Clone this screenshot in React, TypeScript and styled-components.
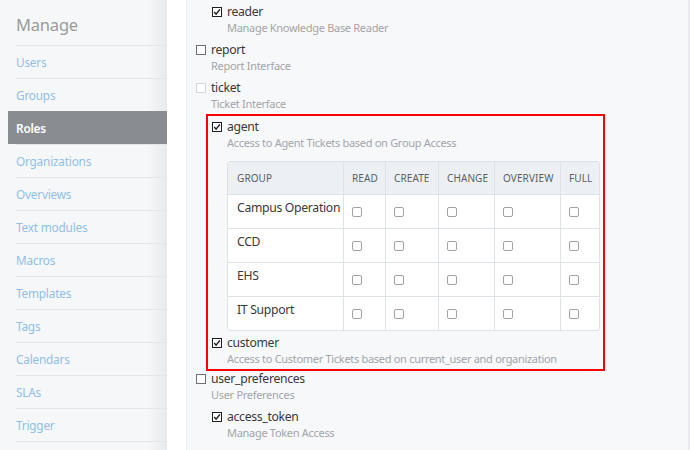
import React from "react";
import styled, { createGlobalStyle } from "styled-components";

const GlobalStyle = createGlobalStyle`
  html, body {
    margin: 0;
    padding: 0;
    background: #fff;
    font-family: "Noto Sans", "Open Sans", sans-serif;
  }
  * {
    box-sizing: border-box;
  }
`;

const Page = styled.div`
  width: 690px;
  height: 450px;
  display: flex;
  overflow: hidden;
`;

const Sidebar = styled.div`
  width: 167px;
  flex-shrink: 0;
  background: linear-gradient(
    to right,
    #f6f7f9 0%,
    #f6f7f9 88%,
    #e7e9ec 100%
  );
  padding-top: 13px;
`;

const SideTitle = styled.div`
  font-size: 16.5px;
  letter-spacing: -0.2px;
  color: #9b9b9b;
  padding: 0 0 8px 16px;
  line-height: 24px;
`;

const SideItem = styled.div<{ active?: boolean }>`
  height: 33px;
  line-height: 32px;
  font-size: 11.8px;
  letter-spacing: -0.2px;
  margin-left: ${(p) => (p.active ? "8px" : "16px")};
  padding-left: ${(p) => (p.active ? "8px" : "0")};
  border-top: 1px solid ${(p) => (p.active ? "#898c91" : "#e4e6e9")};
  background: ${(p) => (p.active ? "#898c91" : "transparent")};
  color: ${(p) => (p.active ? "#fff" : "#8fbfe6")};
  font-weight: ${(p) => (p.active ? 600 : 400)};
`;

const Gutter = styled.div`
  width: 20px;
  flex-shrink: 0;
  background: #fff;
  border-right: 1px solid #eceef0;
`;

const Main = styled.div`
  flex: 1;
  background: #f7f8fa;
  border-right: 2px solid #e8eaed;
  padding: 4px 0 0 9px;
`;

const Item = styled.div<{ nested?: boolean; gap?: number }>`
  display: flex;
  align-items: flex-start;
  gap: 5px;
  padding-left: ${(p) => (p.nested ? "16px" : "0")};
  margin-bottom: ${(p) => (p.gap ?? 6)}px;
`;

const ItemText = styled.div`
  display: flex;
  flex-direction: column;
`;

const Label = styled.div`
  font-size: 12.2px;
  letter-spacing: -0.3px;
  line-height: 16px;
  color: #38393b;
`;

const Desc = styled.div`
  font-size: 11px;
  letter-spacing: -0.3px;
  line-height: 16px;
  color: #a2a5a9;
`;

const BoxWrap = styled.div`
  width: 10px;
  height: 16px;
  display: flex;
  align-items: center;
  flex-shrink: 0;
`;

const Highlight = styled.div`
  margin: -4px 0 0 10px;
  width: 399px;
  border: 2px solid #ff0000;
  padding: 3px 3px 2px 4px;
`;

const Table = styled.div`
  margin: 10px 0 4px 15px;
  border: 1px solid #dde2e6;
  border-radius: 3px;
  overflow: hidden;
  display: grid;
  grid-template-columns: 115px 42px 53px 56px 66px 1fr;
  background: #fff;
`;

const Th = styled.div<{ first?: boolean }>`
  height: 32px;
  display: flex;
  align-items: center;
  padding-left: ${(p) => (p.first ? "9px" : "8px")};
  background: #edf0f2;
  font-size: 10px;
  letter-spacing: 0.1px;
  color: #5c5f63;
  border-left: ${(p) => (p.first ? "none" : "1px solid #dde2e6")};
`;

const Td = styled.div<{ first?: boolean }>`
  height: 34px;
  display: flex;
  align-items: ${(p) => (p.first ? "flex-start" : "center")};
  padding: ${(p) => (p.first ? "5px 0 0 9px" : "0 0 0 8px")};
  font-size: 12.2px;
  letter-spacing: -0.3px;
  line-height: 16px;
  white-space: nowrap;
  color: #38393b;
  border-top: 1px solid #dde2e6;
  border-left: ${(p) => (p.first ? "none" : "1px solid #dde2e6")};
`;

const SmallBox = styled.span`
  width: 10px;
  height: 10px;
  border: 1px solid #9fa2a6;
  border-radius: 2px;
  background: #fff;
  display: inline-block;
`;

type CheckState = "on" | "off" | "disabled";

const Check = ({ state }: { state: CheckState }) => (
  <BoxWrap>
    <svg width="10" height="10" viewBox="0 0 10 10">
      <rect
        x="0.5"
        y="0.5"
        width="9"
        height="9"
        fill="#fff"
        stroke={state === "on" ? "#1f1f1f" : state === "off" ? "#6d6f72" : "#d6d8db"}
        strokeWidth="1"
      />
      {state === "on" && (
        <path
          d="M2.2 5.1 L4.1 7.2 L7.9 2.4"
          fill="none"
          stroke="#1f1f1f"
          strokeWidth="1.5"
        />
      )}
    </svg>
  </BoxWrap>
);

type Perm = {
  name: string;
  desc: string;
  state: CheckState;
  nested?: boolean;
  gap?: number;
};

const PermItem = ({ name, desc, state, nested, gap }: Perm) => (
  <Item nested={nested} gap={gap}>
    <Check state={state} />
    <ItemText>
      <Label>{name}</Label>
      <Desc>{desc}</Desc>
    </ItemText>
  </Item>
);

const menu = [
  "Users",
  "Groups",
  "Roles",
  "Organizations",
  "Overviews",
  "Text modules",
  "Macros",
  "Templates",
  "Tags",
  "Calendars",
  "SLAs",
  "Trigger",
  "",
];

const columns = ["GROUP", "READ", "CREATE", "CHANGE", "OVERVIEW", "FULL"];
const groups = ["Campus Operation", "CCD", "EHS", "IT Support"];

const App = (): JSX.Element => {
  return (
    <Page>
      <GlobalStyle />
      <Sidebar>
        <SideTitle>Manage</SideTitle>
        {menu.map((m, i) => (
          <SideItem key={i} active={m === "Roles"}>
            {m}
          </SideItem>
        ))}
      </Sidebar>
      <Gutter />
      <Main>
        <PermItem
          nested
          state="on"
          name="reader"
          desc="Manage Knowledge Base Reader"
        />
        <PermItem state="off" name="report" desc="Report Interface" />
        <PermItem state="disabled" name="ticket" desc="Ticket Interface" />
        <Highlight>
          <PermItem
            state="on"
            name="agent"
            desc="Access to Agent Tickets based on Group Access"
            gap={0}
          />
          <Table>
            {columns.map((c, i) => (
              <Th key={c} first={i === 0}>
                {c}
              </Th>
            ))}
            {groups.map((g) => (
              <React.Fragment key={g}>
                <Td first>{g}</Td>
                {columns.slice(1).map((c) => (
                  <Td key={c}>
                    <SmallBox />
                  </Td>
                ))}
              </React.Fragment>
            ))}
          </Table>
          <PermItem
            state="on"
            name="customer"
            desc="Access to Customer Tickets based on current_user and organization"
            gap={0}
          />
        </Highlight>
        <PermItem
          state="off"
          name="user_preferences"
          desc="User Preferences"
        />
        <PermItem
          nested
          state="on"
          name="access_token"
          desc="Manage Token Access"
        />
      </Main>
    </Page>
  );
};

export default App;
